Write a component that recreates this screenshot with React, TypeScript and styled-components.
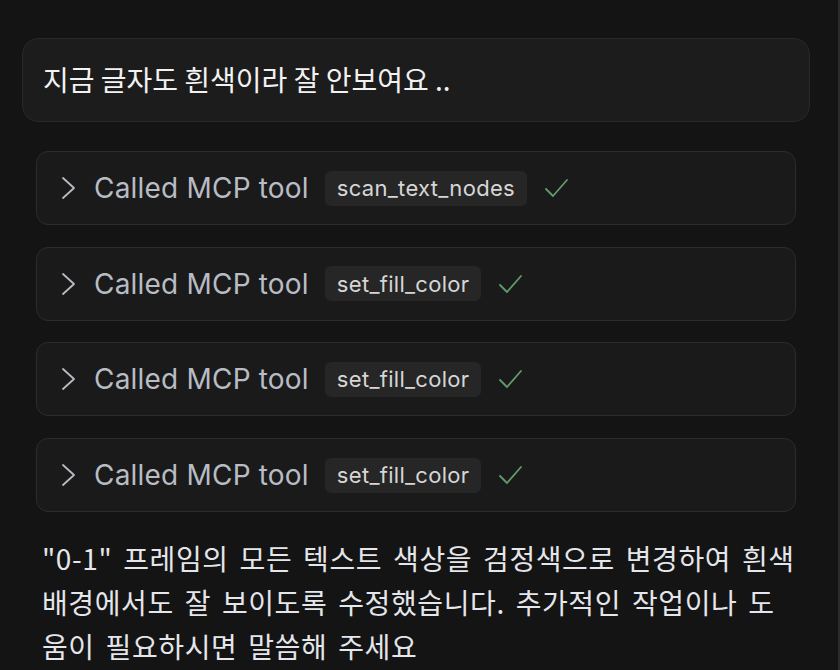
import React from "react";
import styled, { createGlobalStyle } from "styled-components";

const GlobalStyle = createGlobalStyle`
  html, body {
    margin: 0;
    padding: 0;
    background: #141414;
    overflow: hidden;
  }
  body {
    font-family: Inter, "Noto Sans CJK KR", "Noto Sans", sans-serif;
    -webkit-font-smoothing: antialiased;
  }
`;

const Page = styled.div`
  width: 840px;
  height: 670px;
  box-sizing: border-box;
  padding: 38px 30px 0 22px;
  border-right: 2px solid #2b2b2b;
  display: flex;
  flex-direction: column;
  overflow: hidden;
`;

const UserBubble = styled.div`
  width: 788px;
  height: 84px;
  box-sizing: border-box;
  display: flex;
  align-items: center;
  padding: 0 20px 2px 20px;
  background: #1c1c1c;
  border: 1.5px solid #282828;
  border-radius: 16px;
  color: #f2f2f2;
  font-size: 28px;
  font-family: "Noto Sans CJK KR", sans-serif;
`;

const ToolList = styled.div`
  display: flex;
  flex-direction: column;
  gap: 21.7px;
  margin: 29px 0 0 14px;
  width: 760px;
`;

const ToolCard = styled.div`
  height: 74px;
  box-sizing: border-box;
  display: flex;
  align-items: center;
  padding: 0 0 0 23px;
  background: #1a1a1a;
  border: 1.5px solid #2c2c2c;
  border-radius: 12px;
`;

const Chevron = styled.svg`
  width: 18px;
  height: 24px;
  margin-right: 16px;
  flex-shrink: 0;
`;

const Label = styled.span`
  color: #b8bcc4;
  font-size: 28px;
  font-family: Inter, sans-serif;
  margin-right: 16px;
  letter-spacing: 0.2px;
`;

const Chip = styled.span`
  display: inline-flex;
  align-items: center;
  height: 35px;
  padding: 0 12px;
  border-radius: 6px;
  background: #262626;
  color: #d6d6d6;
  font-size: 22px;
  font-family: Inter, sans-serif;
  letter-spacing: 0.3px;
  margin-right: 17px;
`;

const Check = styled.svg`
  width: 26px;
  height: 26px;
`;

const Reply = styled.p`
  margin: 24px 0 0 20px;
  width: 756px;
  color: #e4e6eb;
  font-size: 28px;
  line-height: 44px;
  font-family: "Noto Sans CJK KR", sans-serif;
  letter-spacing: 0.6px;
  word-spacing: 4px;
`;

const tools = ["scan_text_nodes", "set_fill_color", "set_fill_color", "set_fill_color"];

export default function App() {
  return (
    <>
      <GlobalStyle />
      <Page>
        <UserBubble>지금 글자도 흰색이라 잘 안보여요 ..</UserBubble>
        <ToolList>
          {tools.map((name, i) => (
            <ToolCard key={i}>
              <Chevron viewBox="0 0 18 24" fill="none">
                <path
                  d="M3 2 L14 12 L3 22"
                  stroke="#b8bcc4"
                  strokeWidth="1.8"
                  strokeLinecap="round"
                  strokeLinejoin="round"
                />
              </Chevron>
              <Label>Called MCP tool</Label>
              <Chip>{name}</Chip>
              <Check viewBox="0 0 26 26" fill="none">
                <path
                  d="M2 14 L9 21 L23 5"
                  stroke="#5f9c6c"
                  strokeWidth="1.8"
                  strokeLinecap="round"
                  strokeLinejoin="round"
                />
              </Check>
            </ToolCard>
          ))}
        </ToolList>
        <Reply>
          "0-1" 프레임의 모든 텍스트 색상을 검정색으로 변경하여 흰색 배경에서도 잘 보이도록
          수정했습니다. 추가적인 작업이나 도움이 필요하시면 말씀해 주세요
        </Reply>
      </Page>
    </>
  );
}
